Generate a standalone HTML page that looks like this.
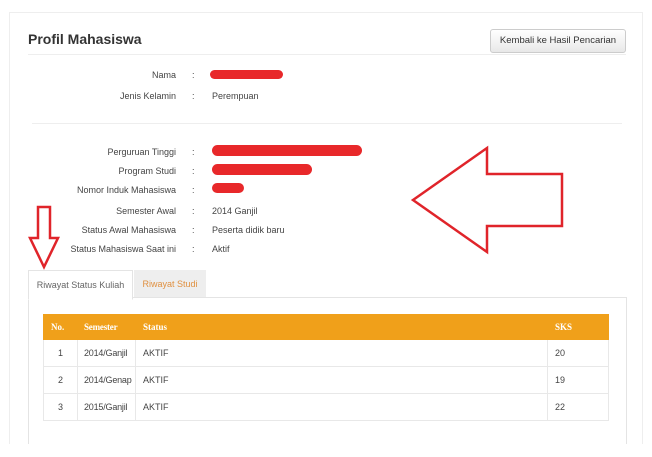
<!DOCTYPE html><html><head><meta charset="utf-8"><style>
body{margin:0;width:652px;height:457px;background:#fff;font-family:"Liberation Sans",sans-serif;position:relative;overflow:hidden;font-size:9px;color:#444}
.a{position:absolute}
.lbl{position:absolute;right:476px;text-align:right;white-space:nowrap}
.c{position:absolute;left:192px}
.v{position:absolute;left:212px;white-space:nowrap}
.red{position:absolute;background:#e8282a;border-radius:6px}
table{border-collapse:collapse;position:absolute;left:43px;top:314px;width:566px;font-size:9px;table-layout:fixed}
td,th{border:1px solid #e8e8e8;padding:0 7px;text-align:left;height:26px;white-space:nowrap;overflow:hidden}
td:nth-child(2),th:nth-child(2){padding:0 4px 0 6px;letter-spacing:-0.2px}
th{background:#f0a01a;color:#fff;border-color:#f0a01a;height:24px;font-family:"Liberation Serif",serif}
</style></head><body>
<div class="a" style="left:9px;top:12px;width:632px;height:431px;border:1px solid #eee;border-bottom:none"></div>
<div class="a" style="left:28px;top:31px;font-size:14px;font-weight:bold;color:#333">Profil Mahasiswa</div>
<div class="a" style="left:490px;top:29px;width:134px;height:22px;border:1px solid #ccc;border-radius:3px;background:linear-gradient(#fff,#e8e8e8);font-size:9.5px;line-height:22px;text-align:center;color:#333">Kembali ke Hasil Pencarian</div>
<div class="a" style="left:28px;top:54px;width:598px;height:1px;background:#eee"></div>
<div class="a" style="left:32px;top:123px;width:590px;height:1px;background:#eee"></div>
<div style="position:absolute;top:70px;left:0;width:652px">
<div class="lbl" style="top:0">Nama</div><div class="c" style="top:0">:</div>
<div class="lbl" style="top:21px">Jenis Kelamin</div><div class="c" style="top:21px">:</div><div class="v" style="top:21px">Perempuan</div>
<div class="lbl" style="top:77px">Perguruan Tinggi</div><div class="c" style="top:77px">:</div>
<div class="lbl" style="top:96px">Program Studi</div><div class="c" style="top:96px">:</div>
<div class="lbl" style="top:115px">Nomor Induk Mahasiswa</div><div class="c" style="top:115px">:</div>
<div class="lbl" style="top:136px">Semester Awal</div><div class="c" style="top:136px">:</div><div class="v" style="top:136px">2014 Ganjil</div>
<div class="lbl" style="top:155px">Status Awal Mahasiswa</div><div class="c" style="top:155px">:</div><div class="v" style="top:155px">Peserta didik baru</div>
<div class="lbl" style="top:174px">Status Mahasiswa Saat ini</div><div class="c" style="top:174px">:</div><div class="v" style="top:174px">Aktif</div>
</div>
<div class="red" style="left:210px;top:70px;width:73px;height:9px"></div>
<div class="red" style="left:212px;top:145px;width:150px;height:11px"></div>
<div class="red" style="left:212px;top:164px;width:100px;height:11px"></div>
<div class="red" style="left:212px;top:183px;width:32px;height:10px"></div>
<div class="a" style="left:28px;top:297px;width:597px;height:146px;border:1px solid #e4e4e4;border-bottom:none"></div>
<div class="a" style="left:28px;top:270px;width:103px;height:28px;border:1px solid #e4e4e4;border-bottom:1px solid #fff;background:#fff;font-size:9px;line-height:28px;text-align:center;color:#666">Riwayat Status Kuliah</div>
<div class="a" style="left:134px;top:270px;width:72px;height:27px;background:#eee;font-size:9px;line-height:29px;text-align:center;color:#e09040">Riwayat Studi</div>
<table><colgroup><col style="width:34px"><col style="width:58px"><col><col style="width:61px"></colgroup>
<tr><th>No.</th><th>Semester</th><th>Status</th><th>SKS</th></tr>
<tr><td style="text-align:center">1</td><td>2014/Ganjil</td><td>AKTIF</td><td>20</td></tr>
<tr><td style="text-align:center">2</td><td>2014/Genap</td><td>AKTIF</td><td>19</td></tr>
<tr><td style="text-align:center">3</td><td>2015/Ganjil</td><td>AKTIF</td><td>22</td></tr></table>
<svg class="a" style="left:0;top:0" width="652" height="457"><g fill="none" stroke="#e0242a" stroke-width="2.5">
<polygon points="413,200 487,148 487,174 562,174 562,226 487,226 487,252"/>
<polygon points="38,207 50,207 50,238 58,238 44,267 30,238 38,238"/></g></svg>
</body></html>
